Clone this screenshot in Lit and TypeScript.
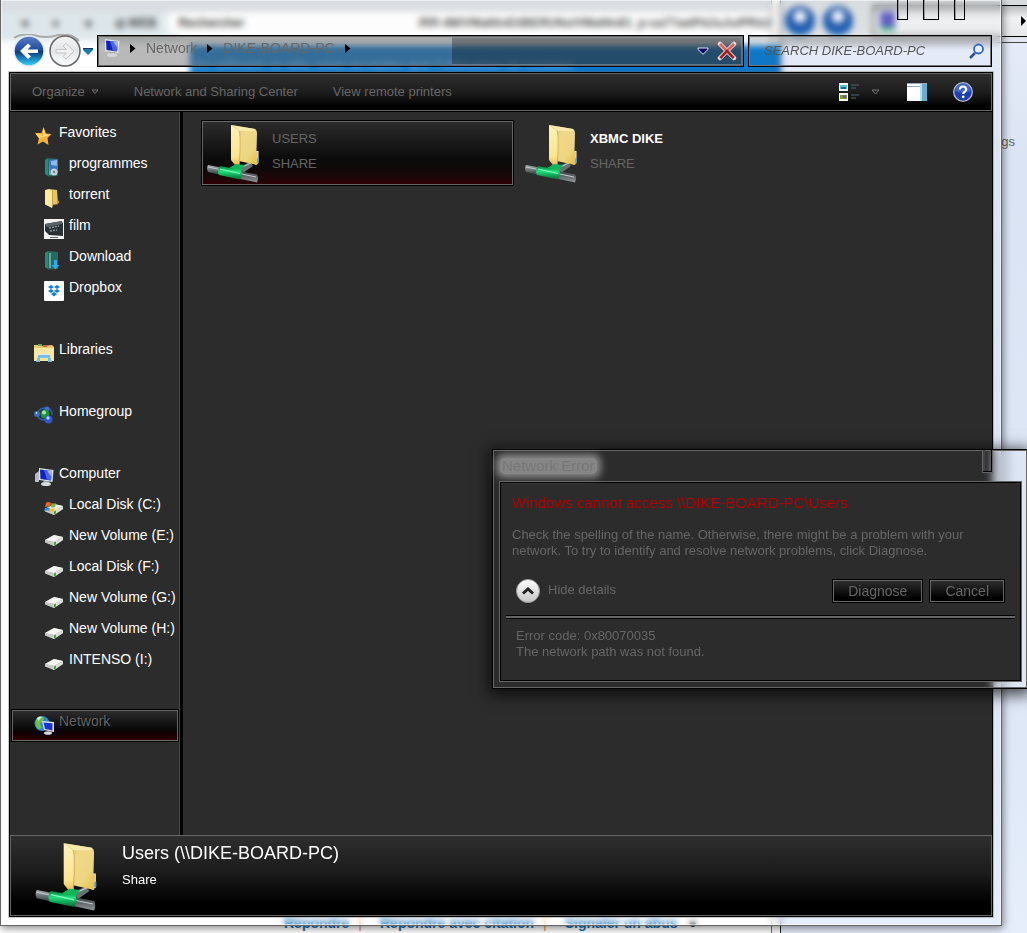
import { LitElement, html, css, svg } from "lit";
import { customElement, property } from "lit/decorators.js";

const folderShare = () => html`<svg viewBox="0 0 52 59" aria-hidden="true">
  <defs>
    <linearGradient id="fb" x1="0" y1="0" x2="1" y2="1"><stop offset="0" stop-color="#cdb268"/><stop offset=".35" stop-color="#efd988"/><stop offset=".7" stop-color="#ecd682"/><stop offset="1" stop-color="#e5bd3d"/></linearGradient>
    <linearGradient id="ff" x1="0" y1="0" x2="0" y2="1"><stop offset="0" stop-color="#fff3ba"/><stop offset=".7" stop-color="#fbe48f"/><stop offset="1" stop-color="#dfa83a"/></linearGradient>
    <linearGradient id="pp" x1="0" y1="0" x2="0" y2="1"><stop offset="0" stop-color="#a9b0b4"/><stop offset=".45" stop-color="#4a4f52"/><stop offset="1" stop-color="#8d9699"/></linearGradient>
    <linearGradient id="gp" x1="0" y1="0" x2="0" y2="1"><stop offset="0" stop-color="#0a7a3a"/><stop offset=".4" stop-color="#1ee07c"/><stop offset="1" stop-color="#03672e"/></linearGradient>
  </defs>
  <path d="M32 43 43 38 46 42 36 49Z" fill="#6b7275"/><path d="M33 44 44 39" stroke="#c3c9cc"/>
  <path d="M48 27h3.500v12l-3.500 2Z" fill="#f5f8fb"/><path d="M50 34h2v4l-2 1Z" fill="#4b97dc"/>
  <path d="M24 1 48 5Q50 6 50 9L49.500 27 51 28 50 41 32 37Z" fill="url(#fb)"/>
  <path d="M24 1 48 5 49 7 33 7Z" fill="#f8e9ac"/>
  <path d="M24 1 32 7Q33.500 9 33 27L32 46 24 36Z" fill="url(#ff)"/>
  <path d="M32 7Q33.500 9 33 27L32 46" fill="none" stroke="#c6a04a" stroke-width=".7"/>
  <path d="M1 41 50 50.500Q52 54 50 58.500L1 48Q-1 44 1 41Z" fill="url(#pp)"/>
  <path d="M1 43 49 53" stroke="#c3c9cc" stroke-width="1"/>
  <path d="M22 44 29 40 38 41 34 47Z" fill="#10b657"/>
  <path d="M13 42 34 46Q36.500 50 33 55.500L12 51Q9.500 46 13 42Z" fill="url(#gp)"/>
  <path d="M13 45 33 49.500" stroke="#8affc0" stroke-width="1.200"/>
</svg>`;

const drive = svg`<path d="M1 11 10 6 19 8 19 11 10 17 1 13Z" fill="#a9a9a9"/><path d="M1 11 10 6 19 8 10 13Z" fill="#f4f4f2"/><path d="M1 11 10 13V17L1 13.500Z" fill="#c9cac8"/><path d="M10 13 19 8.500V11L10 17Z" fill="#dededb"/><path d="M10 13.500 12 12.500V15.500L10 16.500Z" fill="#3fa52c"/>`;
const monitor = svg`<path d="M1 7 5 4V15L1 15Z" fill="#b8bcc0"/><path d="M5 1 19.500 3 18.500 15 5 13Z" fill="#dfe3ea"/><path d="M6 2.500 18 4 17 13.500 6.500 12Z" fill="#1222b8"/><path d="M10 3 18 4 17 13 13 12.800Z" fill="#4a63e8"/><path d="M13 3.500 18 4 17.500 10Z" fill="#a5b4fa"/><path d="M9 14h6v2h-5Z" fill="#9a9fa5"/><ellipse cx="12" cy="17" rx="5" ry="2" fill="#d6d8da"/>`;
const book = svg`<path d="M1 3 4 1V19L1 17Z" fill="#2b8a72"/><path d="M4 1 14 2V19L4 19.500Z" fill="#256a62"/><path d="M5 3 7 3V18L5 18Z" fill="#63a99b"/>`;

const icons: Record<string, unknown> = {
  star: svg`<path d="M9.500 1 12 7.500 17.500 8 13.500 12 14.500 19 9 15.500 3.500 18.500 5 12 1 7 7.500 7Z" fill="#f9b233"/><path d="M9.500 2 11.300 8 16 8.700 9 11Z" fill="#ffe08a"/><path d="M1.500 7.500 7.500 8 9 11 5 12.500Z" fill="#ffd05e"/>`,
  programs: svg`${book}<path d="M5 3 14 2V15L6 16Z" fill="#3c72c4"/><path d="M7 4 13 3V9L7 8Z" fill="#8cb8ea"/><circle cx="10" cy="15" r="3.500" fill="#c7d2d8"/><circle cx="10" cy="15" r="1.200" fill="#6b8794"/>`,
  folder: svg`<path d="M5 1 13 2 14 16 8 17Z" fill="#e3c565"/><path d="M13 11 15.500 14 13 17Z" fill="#b99339"/><path d="M1 2 5 1 8 3V20L1 16.500Z" fill="#fbeaa2"/><path d="M8 3 9 3V18L8 20Z" fill="#c79d3e"/>`,
  film: svg`<rect width="20" height="20" fill="#f2f2f2"/><path d="M1 5 18 2 19 5 19 17 5 16 1 12Z" fill="#2a3135"/><path d="M1 5 18 2V5L3 8Z" fill="#59646a"/><path d="M5 9 15 7M6 12 13 11" stroke="#8b989c" stroke-width="1.500" stroke-dasharray="2 1"/><path d="M6 18h8v1H6Z" fill="#666"/>`,
  download: svg`${book}<path d="M10 10h3v5h2.500L11.500 19.500 7.500 15H10Z" fill="#30a8f5"/>`,
  dropbox: svg`<rect width="20" height="20" rx="1" fill="#fff"/><path d="M7 4 10 6 7 8 4 6ZM13 4 16 6 13 8 10 6ZM7 8 10 10 7 12 4 10ZM13 8 16 10 13 12 10 10ZM10 11 13 13 10 15.500 7 13Z" fill="#1081de"/>`,
  libraries: svg`<path d="M0 2H7L8 3 18 2 20 4V18H0Z" fill="#e8c96e"/><path d="M0 5H20V18H0Z" fill="#f9e6a3"/><path d="M4 1h4v2H4Z" fill="#5aa858"/><path d="M9 2h4v2H9Z" fill="#d8614c"/><path d="M4 11H16V14L18 19H14V15H6V19H2L4 14Z" fill="#79bde4"/><path d="M4 11H16V12H4Z" fill="#d4effb"/>`,
  homegroup: svg`<path d="M3 8Q6 3 12 3T18 10M3 10Q5 16 14 15" fill="none" stroke="#2d5fae" stroke-width="1.500"/><circle cx="13" cy="4" r="2.500" fill="#3d6ed0"/><circle cx="3" cy="9" r="3" fill="#3e69c6"/><circle cx="2.500" cy="8" r="1" fill="#b4cffa"/><circle cx="11" cy="9" r="4.500" fill="#1f9340"/><circle cx="10" cy="7.500" r="2" fill="#a5eaa6"/><circle cx="14.500" cy="14.500" r="4" fill="#2f56ca"/><circle cx="14" cy="13" r="1.700" fill="#b2ccff"/>`,
  computer: monitor,
  system: svg`${drive}<path d="M2 5Q4 3 7 5L6 9Q4 8 1 9Z" fill="#e3672c"/><path d="M7.500 5Q10 6 12 5L11 9Q9 10 7 9Z" fill="#77b93c"/><path d="M1 10Q4 9 6 10L5 13Q3 12 0 13Z" fill="#378ed9"/><path d="M6.500 10Q9 11 11 10L10 14Q8 14 5.500 13Z" fill="#f4c12f"/>`,
  drive,
  network: svg`<circle cx="8" cy="8.500" r="7.500" fill="#2f86cf"/><path d="M4 2Q9 0 10 4L6 9 8 13 4 14Q-1 8 4 2Z" fill="#6cc04a"/><path d="M3 3Q6 1 8 2L4 6Z" fill="#d3f1c7"/><path d="M8 6 20 7V17L10 15Z" fill="#dfe5ec"/><path d="M9.500 7.500 18.500 8.300V15.500L11 14Z" fill="#1a35d0"/><ellipse cx="14" cy="18" rx="4" ry="1.800" fill="#d8dbdf"/>`,
};

@customElement("nav-entry")
class NavEntry extends LitElement {
  @property() icon = "";
  @property() label = "";
  @property({ type: Boolean }) child = false;
  @property({ type: Boolean }) selected = false;
  static styles = css`
    :host { display: block; }
    a { display: flex; align-items: flex-start; gap: 5px; height: 29px; padding: 0 0 0 21px; border: 1px solid transparent; color: #fff; font: 14px/20px "Liberation Sans", sans-serif; text-decoration: none; white-space: nowrap; }
    a.child { padding-left: 31px; }
    a.selected { color: #666; border-color: #666; outline: 1px solid #000; background: linear-gradient(#2c2c2c, #0a0a0a 60%, #0d0000 75%, #2a0004); text-shadow: 1px 1px #000; }
    svg { flex: none; width: 20px; height: 20px; margin-top: 4px; }
  `;
  render() {
    return html`<a href="#" class="${this.child ? "child" : ""} ${this.selected ? "selected" : ""}">
      <svg viewBox="0 0 20 20" aria-hidden="true">${icons[this.icon]}</svg><span>${this.label}</span></a>`;
  }
}

type Entry = [icon: string, label: string];
const groups: { head: Entry; items: Entry[]; selected?: boolean }[] = [
  { head: ["star", "Favorites"], items: [["programs", "programmes"], ["folder", "torrent"], ["film", "film"], ["download", "Download"], ["dropbox", "Dropbox"]] },
  { head: ["libraries", "Libraries"], items: [] },
  { head: ["homegroup", "Homegroup"], items: [] },
  { head: ["computer", "Computer"], items: [["system", "Local Disk (C:)"], ["drive", "New Volume (E:)"], ["drive", "Local Disk (F:)"], ["drive", "New Volume (G:)"], ["drive", "New Volume (H:)"], ["drive", "INTENSO (I:)"]] },
  { head: ["network", "Network"], items: [], selected: true },
];

@customElement("error-dialog")
class ErrorDialog extends LitElement {
  static styles = css`
    :host { display: block; box-sizing: border-box; padding: 0 6px 7px 7px; border: 1px solid #000; box-shadow: inset 0 0 0 1px #666, 0 3px 14px 3px rgba(0, 0, 0, .7); backdrop-filter: blur(5px); font: 13px/16px "Liberation Sans", sans-serif; color: #666; }
    header { display: flex; justify-content: space-between; height: 32px; }
    h2 { align-self: center; margin: 0; padding: 0 2px; font: 15px/16px "Comic Sans MS", "Liberation Sans", sans-serif; color: #777; background: rgba(150, 150, 150, .85); box-shadow: 0 0 7px 4px rgba(150, 150, 150, .85); border-radius: 4px; }
    .close { width: 11px; height: 23px; margin-right: 28px; padding: 0; background: transparent; border: 1px solid #666; border-top: 0; box-shadow: inset -1px -1px #000, inset 2px 0 #444; }
    .body { padding: 10px 5px 20px; border: 1px solid #000; outline: 1px solid #666; background: #2c2c2c; }
    h3 { margin: 0 6px 14px; font-size: 15px; line-height: 20px; font-weight: normal; color: #b80000; }
    p { margin: 0 6px; }
    .row { display: flex; align-items: center; gap: 6px; margin: 20px 10px 12px; }
    .toggle { display: flex; align-items: center; gap: 8px; margin-right: auto; padding: 0; border: 0; background: none; color: inherit; font: inherit; }
    .toggle svg { width: 24px; height: 24px; }
    .toggle span { margin-bottom: 2px; }
    .push { height: 24px; padding: 0 15px; border: 1px solid #000; box-shadow: inset 0 0 0 1px #666; background: linear-gradient(#303030, #000 80%); color: #666; font: 14px/20px "Liberation Sans", sans-serif; }
    .rule { height: 2px; border: solid #000; border-width: 1px 0; background: #666; margin-bottom: 9px; }
    .details { margin: 0 10px; }
  `;
  render() {
    return html`<header><h2>Network Error</h2><button class="close" aria-label="Close"></button></header>
      <div class="body">
        <h3>Windows cannot access \\\\DIKE-BOARD-PC\\Users</h3>
        <p>Check the spelling of the name. Otherwise, there might be a problem with your network. To try to identify and resolve network problems, click Diagnose.</p>
        <div class="row">
          <button class="toggle"><svg viewBox="0 0 24 24" aria-hidden="true"><defs><linearGradient id="t" x1="0" y1="0" x2="0" y2="1"><stop stop-color="#fff"/><stop offset="1" stop-color="#c4c4c4"/></linearGradient></defs><circle cx="12" cy="12" r="11.500" fill="url(#t)" stroke="#999"/><path d="M7 14.500 12 10 17 14.500" fill="none" stroke="#222" stroke-width="3"/></svg><span>Hide details</span></button>
          <button class="push">Diagnose</button><button class="push">Cancel</button>
        </div>
        <div class="rule"></div>
        <div class="details">Error code: 0x80070035<br />The network path was not found.</div>
      </div>`;
  }
}

@customElement("app-root")
class AppRoot extends LitElement {
  static styles = css`
    :host { display: block; font: 13px/16px "Liberation Sans", sans-serif; color: #666; }
    .desktop { position: relative; min-height: 100vh; overflow: hidden; background: #fbfbfb; }

    /* windows lying behind the explorer */
    .browser { position: absolute; inset: 0 255px 0 0; display: flex; flex-direction: column; background: #fff; border-right: 1px solid #777; }
    .tabs { height: 12px; background: #d9dde1; }
    .bar { display: flex; align-items: center; gap: 22px; box-sizing: border-box; height: 22px; padding: 0 0 0 18px; background: linear-gradient(90deg, #dde6ea 0 162px, #fdfdfd 172px); color: #444; font-size: 12px; white-space: nowrap; overflow: hidden; }
    .bar .url { flex: 1; text-align: right; font-weight: bold; color: #555; }
    .page { display: flex; flex-direction: column; flex: 1; justify-content: space-between; }
    .under { height: 7px; width: 180px; background: linear-gradient(90deg, #dde6ea, #e4ebee); }
    .cookie { box-sizing: border-box; height: 44px; margin: 4px -10px auto 190px; padding: 13px 4px; background: #0f77c7; color: #6fb2e6; font: bold 13px/14px "Liberation Sans", sans-serif; white-space: nowrap; overflow: hidden; }
    .links { display: flex; gap: 9px; padding: 0 0 1px 284px; font: bold 14px/18px "Liberation Sans", sans-serif; color: #d8963c; white-space: nowrap; }
    .links a { color: #1a74b8; text-decoration: none; }
    .links a + span { margin-right: 9px; font-weight: normal; }
    .links .dot { margin-left: 2px; color: #444; }
    .other { position: absolute; inset: 0 0 0 780px; border-left: 1px solid #222; background: linear-gradient(#d8dcdf, #dfe2e5 36px, #e5ebf7 44px, #dbe4f4 160px, #dfe8f7 80%, #e6eefb); }
    .otherbar { display: flex; align-items: center; gap: 4px; height: 42px; border-bottom: 1px solid #444; }
    .ball { width: 30px; height: 30px; margin-left: 4px; border-radius: 50%; background: radial-gradient(circle at 50% 35%, #fff 15%, #2356a8 35%, #1e60b5 65%, #38c6ee); }
    .otheraddr { display: flex; flex: 1; align-items: center; justify-content: space-between; height: 30px; margin-left: 16px; padding: 0 0 0 6px; border: 1px solid #000; border-right: 0; background: linear-gradient(#b9bcbe, #f1f2f4 40%, #e6e8eb); }
    .otheraddr i { width: 15px; height: 15px; background: #615fc0; border-bottom: 4px solid #52c690; }
    .otheraddr svg { width: 6px; height: 12px; }
    .otherlink { display: flex; justify-content: flex-end; margin: 91px 12px 0; }

    .explorer { position: absolute; inset: 0 25px 7px 0; display: flex; flex-direction: column; padding: 0 8px 8px; border: 1px solid #666; border-top: 0; box-shadow: inset 0 0 0 1px rgba(255, 255, 255, .55), 1px 2px 8px rgba(0, 0, 0, .5); backdrop-filter: blur(3px); }
    .caption { display: flex; justify-content: flex-end; gap: 15px; height: 35px; padding-right: 28px; }
    .caption button { width: 16px; height: 20px; padding: 0; background: transparent; border: 1px solid #000; border-top: 0; box-shadow: inset 1px 0 #999; }
    .caption .small { width: 11px; }
    .nav { display: flex; align-items: center; gap: 4px; height: 32px; margin-bottom: 5px; padding-right: 1px; }
    .history { display: flex; align-items: center; width: 88px; margin-left: -4px; }
    .history button, .icon { padding: 0; border: 0; background: none; display: flex; }
    .history svg { width: 88px; height: 34px; flex: none; }
    .address { display: flex; flex: 1; box-sizing: border-box; height: 32px; border: 1px solid #000; box-shadow: inset 0 0 0 1px #666; background: linear-gradient(rgba(120, 120, 120, .65), rgba(100, 100, 100, .45) 40%, rgba(95, 95, 95, .45)); font-size: 14px; }
    .crumbs { display: flex; flex: 1; align-items: flex-start; gap: 10px; padding: 2px 2px; }
    .crumbs a { color: #666; text-decoration: none; line-height: 20px; }
    .crumbs .arrow { width: 6px; height: 20px; }
    .crumbs .pc { width: 20px; height: 20px; }
    .tail { display: flex; flex: 0 0 45%; align-items: center; justify-content: flex-end; gap: 8px; margin: 1px; padding-right: 4px; box-sizing: border-box; border: 1px solid rgba(150, 170, 185, .45); border-left: 0; background: rgba(0, 0, 0, .3); }
    .search { display: flex; align-items: center; box-sizing: border-box; width: 244px; height: 32px; padding: 0 6px 0 15px; border: 1px solid #000; box-shadow: inset 0 0 0 1px #777; background: linear-gradient(rgba(120, 120, 120, .4), transparent 45%); }
    input { flex: 1; min-width: 0; padding: 0; border: 0; outline: 0; background: transparent; font: italic 13px/20px "Segoe Print", "Liberation Sans", sans-serif; color: #555; }
    input::placeholder { color: #555; opacity: 1; }

    .client { display: flex; flex: 1; flex-direction: column; border: 1px solid #000; outline: 1px solid rgba(100, 100, 100, .35); background: #2c2c2c; }
    .tools { display: flex; align-items: center; gap: 35px; box-sizing: border-box; height: 38px; padding: 0 18px 0 21px; border: 1px solid #666; background: linear-gradient(#2e2e2e, #1d1d1d 50%, #000 90%); }
    .tools button { padding: 0; border: 0; background: none; display: flex; align-items: center; gap: 6px; color: #666; font: inherit; }
    .right { display: flex; align-items: center; gap: 26px; margin-left: auto; }
    .tools .view { gap: 12px; }
    .panes { display: flex; flex: 1; border-top: 1px solid #000; }
    .side { box-sizing: border-box; width: 170px; padding: 9px 1px 0 2px; border-right: 1px solid #444; }
    .split { width: 3px; box-sizing: border-box; border: solid #000; border-width: 0 2px 0 1px; background: #444; }
    .group { margin-bottom: 31px; }
    .files { display: grid; flex: 1; grid-template-columns: repeat(auto-fill, 313px); align-content: start; gap: 5px; padding: 8px 0 0 18px; }
    .file { display: flex; align-items: center; gap: 13px; box-sizing: border-box; height: 66px; padding: 0 5px; border: 1px solid transparent; color: #666; text-decoration: none; font: 13px/25px "Segoe Print", "Liberation Sans", sans-serif; }
    .file.on { border-color: #000; box-shadow: inset 0 0 0 1px #666; background: linear-gradient(#2c2c2c, #0b0b0b 60%, #0e0a0a 75%, #2c0004); }
    .file svg { width: 52px; height: 59px; }
    .file div { margin-bottom: 4px; }
    .file b { color: #fff; }
    .details { display: flex; gap: 25px; box-sizing: border-box; height: 81px; padding: 6px 24px; border: 1px solid #666; background: linear-gradient(#2e2e2e, #1c1c1c 45%, #000 85%); color: #fff; }
    .details svg { width: 62px; height: 69px; }
    .details h1 { margin: 0 0 8px; font: 18px/22px "Comic Sans MS", "Liberation Sans", sans-serif; }
    error-dialog { position: absolute; left: 492px; top: 449px; width: 536px; }
  `;
  private arrow = () => html`<svg class="arrow" viewBox="0 0 6 20" aria-hidden="true"><path d="M0 6 5.500 10.500 0 15Z" fill="#000"/></svg>`;
  render() {
    return html`<div class="desktop">
      <div class="browser">
        <div class="tabs"></div>
        <div class="bar"><span>◄</span><span>●</span><span>◄</span><b>◎ WEB</b><b>Rechercher</b><span class="url">/RR-4M/VMaNtvEt/BERUNo/VMaNtvEt_p-ua77aeIPdJuJu/PRdJ</span></div>
        <div class="page"><div class="under"></div><div class="cookie">En utilisant ce site, vous acceptez que l'utilisation de cookies</div>
          <div class="links"><a href="#">Répondre</a><span>|</span><a href="#">Répondre avec citation</a><span>|</span><a href="#">Signaler un abus</a><span class="dot">●</span></div></div>
      </div>
      <div class="other">
        <div class="otherbar"><span class="ball"></span><span class="ball"></span><div class="otheraddr"><i></i><svg viewBox="0 0 6 12"><path d="M0 1 5 6 0 11Z" fill="#000"/></svg></div></div>
        <div class="otherlink">gs</div>
      </div>
      <main class="explorer">
        <div class="caption"><button class="small" aria-label="Minimize"></button><button aria-label="Maximize"></button><button class="small" aria-label="Close"></button></div>
        <div class="nav">
          <div class="history"><button aria-label="Back and forward"><svg viewBox="0 0 88 34" aria-hidden="true">
            <defs><linearGradient id="bk" x1="0" y1="0" x2="0" y2="1"><stop stop-color="#5e7dc5"/><stop offset=".48" stop-color="#1b4a9e"/><stop offset=".52" stop-color="#073a83"/><stop offset="1" stop-color="#35d3fb"/></linearGradient>
            <linearGradient id="fw" x1="0" y1="0" x2="0" y2="1"><stop stop-color="#f4f4f5"/><stop offset=".5" stop-color="#e2e6e8"/><stop offset="1" stop-color="#fff"/></linearGradient></defs>
            <path d="M9 4Q16-1 28 1 42 5 53 1 67-1 74 7" fill="none" stroke="#aaa" stroke-width="2"/>
            <circle cx="24" cy="17" r="15" fill="url(#bk)" stroke="#e3edf5" stroke-width="1.500"/><path d="M15 17 23 9.500 26 12 22.500 15.500H33V19H22.500L26 22.500 23 25Z" fill="#fff"/>
            <circle cx="60" cy="17" r="15" fill="url(#fw)" stroke="#666" stroke-width="1.500"/><path d="M69 17 61 9.500 58 12 61.500 15.500H51V19H61.500L58 22.500 61 25Z" fill="#f2f2f2" stroke="#c4c4c4"/>
            <path d="M78 14H88V16L83 21 78 16Z" fill="#1b79ad"/><path d="M78 14.500H88" stroke="#123c66"/></svg></button></div>
          <div class="address">
            <div class="crumbs"><svg class="pc" viewBox="0 0 20 20" aria-hidden="true">${monitor}</svg>${this.arrow()}<a href="#">Network</a>${this.arrow()}<a href="#">DIKE-BOARD-PC</a>${this.arrow()}</div>
            <div class="tail">
              <button class="icon" aria-label="Previous locations"><svg width="12" height="8" viewBox="0 0 12 8"><path d="M1 1H11V2.500L6 7.300 1 2.500Z" fill="#0b0c62" stroke="#dde4ef"/></svg></button>
              <button class="icon" aria-label="Stop"><svg width="20" height="20" viewBox="0 0 20 20"><path d="M3 3 17 17M17 3 3 17" stroke="#eedcde" stroke-width="4.500" stroke-linecap="round"/><path d="M3 3 17 17M17 3 3 17" stroke="#e0605f" stroke-width="2.800"/><path d="M3.500 17 10 10 16.500 17" fill="none" stroke="#972021" stroke-width="2.500"/></svg></button>
            </div>
          </div>
          <label class="search"><input type="search" aria-label="Search" placeholder="SEARCH DIKE-BOARD-PC" />
            <svg width="17" height="17" viewBox="0 0 17 17" aria-hidden="true"><path d="M7 10 2 15" stroke="#2d4f9c" stroke-width="2.500"/><circle cx="10.500" cy="6" r="4.500" fill="#e6eef9" stroke="#3467bd" stroke-width="1.800"/></svg></label>
        </div>
        <div class="client">
          <div class="tools">
            <button>Organize <svg width="8" height="6" viewBox="0 0 8 6"><path d="M1 1H7L4 4.500Z" fill="none" stroke="#777"/></svg></button>
            <button>Network and Sharing Center</button><button>View remote printers</button>
            <div class="right">
              <button class="view" aria-label="Change your view"><svg width="20" height="19" viewBox="0 0 20 19"><path d="M0 0H9V8H0ZM0 10H9V18H0Z" fill="#fff"/><path d="M1 2H8V6H1Z" fill="#5fc0d8"/><path d="M2 4H7V6H2Z" fill="#126a8c"/><path d="M1 12H8V16H1Z" fill="#7b9a3c"/><path d="M4 12H7V15H4Z" fill="#8c49c9"/><path d="M12 2H20M12 5H17M12 12H20M12 15H17" stroke="#52657c"/></svg><svg width="10" height="6" viewBox="0 0 10 6"><path d="M1 1H8L4.500 5Z" fill="none" stroke="#777"/></svg></button>
              <button aria-label="Preview pane"><svg width="20" height="18" viewBox="0 0 20 18"><path d="M0 0H20V18H0Z" fill="#fff"/><path d="M0 .500H20M0 3.500H13" stroke="#9aabbc"/><path d="M13 1H20V18H13Z" fill="#67afd0"/><path d="M13 1H15V18H13Z" fill="#b5e0ef"/></svg></button>
              <button aria-label="Help"><svg width="20" height="20" viewBox="0 0 20 20"><circle cx="10" cy="10" r="9.300" fill="#1c3fb1" stroke="#b8bccb" stroke-width="1.300"/><path d="M2 9A8 8 0 0 1 18 9Q10 12 2 9Z" fill="#5b7cdb" opacity=".6"/><path d="M6.800 7.500Q7 4.500 10 4.500T13.200 7.300Q13.200 9 11.500 10 10.200 10.800 10.200 12" fill="none" stroke="#fff" stroke-width="2.200"/><circle cx="10.200" cy="14.800" r="1.400" fill="#fff"/></svg></button>
            </div>
          </div>
          <div class="panes">
            <nav class="side">${groups.map((g) => html`<div class="group">
              <nav-entry icon=${g.head[0]} label=${g.head[1]} ?selected=${g.selected}></nav-entry>
              ${g.items.map(([icon, label]) => html`<nav-entry child icon=${icon} label=${label}></nav-entry>`)}</div>`)}</nav>
            <div class="split"></div>
            <section class="files">
              <a class="file on" href="#">${folderShare()}<div>USERS<br />SHARE</div></a>
              <a class="file" href="#">${folderShare()}<div><b>XBMC DIKE</b><br />SHARE</div></a>
            </section>
          </div>
          <footer class="details">${folderShare()}<div><h1>Users (\\\\DIKE-BOARD-PC)</h1>Share</div></footer>
        </div>
      </main>
      <error-dialog></error-dialog>
    </div>`;
  }
}
